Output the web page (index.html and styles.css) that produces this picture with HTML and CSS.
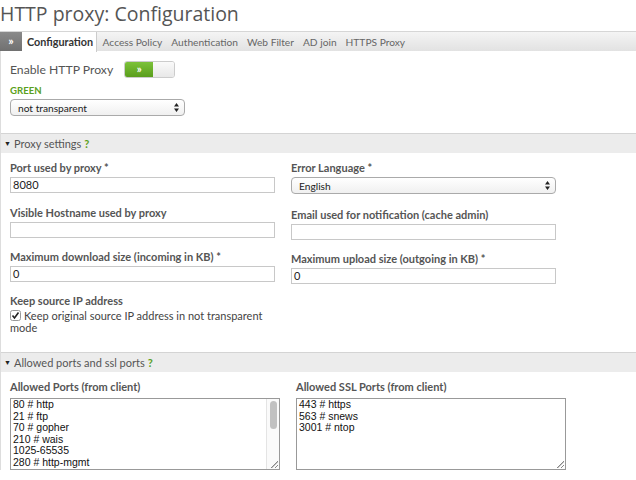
FILE: index.html
```html
<!DOCTYPE html>
<html>
<head>
<meta charset="utf-8">
<link rel="stylesheet" href="styles.css">
</head>
<body>
<h1 class="title">HTTP proxy: Configuration</h1>
<div class="tabs">
  <span class="tab-toggle">»</span>
  <span class="tab active">Configuration</span>
  <span class="tab">Access Policy</span>
  <span class="tab">Authentication</span>
  <span class="tab">Web Filter</span>
  <span class="tab">AD join</span>
  <span class="tab">HTTPS Proxy</span>
</div>
<div class="content">
  <div class="enable-row">
    <span class="enable-label">Enable HTTP Proxy</span>
    <span class="switch"><span class="switch-on">»</span><span class="switch-off"></span></span>
  </div>
  <div class="zone">GREEN</div>
  <div class="select wide"><span>not transparent</span><svg class="arrows" width="5" height="9" viewBox="0 0 5 9"><path d="M2.5 0 L5 3.5 L0 3.5 Z M0 5.5 L5 5.5 L2.5 9 Z" fill="#222"/></svg></div>

  <div class="section-head"><span class="tri">▼</span>Proxy settings <span class="help">?</span></div>
  <div class="grid">
    <div class="field">
      <div class="label">Port used by proxy *</div>
      <div class="input">8080</div>
    </div>
    <div class="field">
      <div class="label">Error Language *</div>
      <div class="select lang"><span>English</span><svg class="arrows" width="5" height="9" viewBox="0 0 5 9"><path d="M2.5 0 L5 3.5 L0 3.5 Z M0 5.5 L5 5.5 L2.5 9 Z" fill="#222"/></svg></div>
    </div>
    <div class="field">
      <div class="label">Visible Hostname used by proxy</div>
      <div class="input"></div>
    </div>
    <div class="field shift">
      <div class="label">Email used for notification (cache admin)</div>
      <div class="input"></div>
    </div>
    <div class="field">
      <div class="label">Maximum download size (incoming in KB) *</div>
      <div class="input">0</div>
    </div>
    <div class="field shift">
      <div class="label">Maximum upload size (outgoing in KB) *</div>
      <div class="input">0</div>
    </div>
    <div class="field">
      <div class="label">Keep source IP address</div>
      <div class="check"><svg class="box" width="11" height="11" viewBox="0 0 11 11"><rect x="0.5" y="0.5" width="10" height="10" rx="2" fill="#fff" stroke="#999"/><path d="M2.5 5.5 L4.5 8 L8.5 2.5" fill="none" stroke="#222" stroke-width="1.6"/></svg><span class="check-text">Keep original source IP address in not transparent mode</span></div>
    </div>
  </div>

  <div class="section-head second"><span class="tri">▼</span>Allowed ports and ssl ports <span class="help">?</span></div>
  <div class="ports">
    <div class="field">
      <div class="label">Allowed Ports (from client)</div>
      <div class="textarea"><div class="lines">80 # http<br>21 # ftp<br>70 # gopher<br>210 # wais<br>1025-65535<br>280 # http-mgmt</div><div class="scroll"><span class="thumb"></span></div><span class="grip"></span></div>
    </div>
    <div class="field">
      <div class="label">Allowed SSL Ports (from client)</div>
      <div class="textarea"><div class="lines">443 # https<br>563 # snews<br>3001 # ntop</div><span class="grip"></span></div>
    </div>
  </div>
</div>
</body>
</html>
```

FILE: styles.css
```css
html, body {
  margin: 0;
  padding: 0;
  background: #fff;
  font-family: "Lato", "Open Sans", sans-serif;
  color: #555;
  overflow: hidden;
}
.title {
  margin: 0;
  height: 31px;
  font-family: "Open Sans", sans-serif;
  font-size: 19.5px;
  font-weight: 400;
  line-height: 28px;
  color: #555;
}
.tabs {
  display: flex;
  align-items: stretch;
  height: 20px;
  border-top: 1px solid #d6d6d6;
  background: linear-gradient(#f4f4f4, #e2e2e2);
  font-size: 10.2px;
  line-height: 20px;
  box-sizing: border-box;
}
.tab-toggle {
  width: 22px;
  background: linear-gradient(#8a8a8a, #707070);
  color: #fff;
  font-size: 12px;
  font-weight: 700;
  text-align: center;
  line-height: 18px;
}
.tab {
  padding: 0 4.5px;
  color: #666;
}
.tab.active {
  background: #fff;
  color: #333;
  font-weight: 700;
  font-size: 10.8px;
  border-right: 1px solid #ccc;
  padding: 0 3px 0 5px;
  margin-bottom: -1px;
  margin-right: 1px;
}
.content {
  border-left: 1px solid #ddd;
  padding-top: 9px;
}
.enable-row {
  display: flex;
  align-items: center;
  gap: 11px;
  padding-left: 9px;
  height: 18px;
}
.enable-label {
  font-size: 12.2px;
  color: #555;
}
.switch {
  display: flex;
  width: 49px;
  height: 15px;
  border: 1px solid #ccc;
  border-radius: 3px;
  overflow: hidden;
}
.switch-on {
  width: 28px;
  background: linear-gradient(#7cc23a, #5a9e1c);
  color: #fff;
  font-size: 11px;
  font-weight: 700;
  text-align: center;
  line-height: 13px;
}
.switch-off {
  flex: 1;
  background: linear-gradient(#fafafa, #e8e8e8);
}
.zone {
  margin: 7px 0 0 9px;
  color: #5aa020;
  font-size: 9.6px;
  font-weight: 700;
  line-height: 12px;
}
.select {
  display: flex;
  justify-content: space-between;
  align-items: center;
  box-sizing: border-box;
  height: 17px;
  border: 1px solid #aaa;
  border-radius: 4px;
  background: linear-gradient(#fff, #f0f0f0);
  color: #222;
  font-size: 10.2px;
  padding: 0 5px 0 7px;
}
.select.wide {
  width: 175px;
  margin: 2px 0 0 9px;
}
.arrows {
  display: block;
  flex: none;
}
.section-head {
  margin-top: 17px;
  height: 19px;
  border-top: 1px solid #d4d4d4;
  background: #ececec;
  font-size: 11px;
  line-height: 19px;
  color: #555;
  display: flex;
  align-items: center;
}
.tri {
  font-size: 7px;
  width: 13px;
  text-align: center;
  color: #222;
}
.help {
  color: #5aa020;
  font-weight: 700;
  margin-left: 3px;
}
.grid {
  display: grid;
  grid-template-columns: 281px 281px;
  align-items: start;
  padding: 8px 0 0 9px;
  row-gap: 12px;
}
.shift .label {
  margin-top: 2px;
}
.shift .input {
  margin-bottom: -2px;
}
.label {
  font-size: 11px;
  font-weight: 700;
  color: #555;
  line-height: 13px;
  margin-bottom: 3px;
}
.input {
  box-sizing: border-box;
  width: 265px;
  height: 16px;
  border: 1px solid #c8c8c8;
  font-size: 11px;
  line-height: 14px;
  padding-left: 2px;
  color: #222;
}
.select.lang {
  width: 265px;
}
.check {
  width: 258px;
  font-size: 11px;
  line-height: 12px;
  color: #444;
}
.box {
  display: inline-block;
  margin-right: 3px;
  vertical-align: -1px;
}
.second {
  margin-top: 18px;
}
.ports {
  display: grid;
  grid-template-columns: 286px 281px;
  padding: 8px 0 0 9px;
}
.ports .label {
  margin-bottom: 5px;
}
.textarea {
  position: relative;
  box-sizing: border-box;
  width: 270px;
  height: 72px;
  border: 1px solid #999;
  font-family: "Liberation Sans", Arial, sans-serif;
  font-size: 10.5px;
  line-height: 11.6px;
  color: #111;
  display: flex;
  overflow: hidden;
}
.lines {
  flex: 1;
  padding: 0 2px;
}
.scroll {
  width: 12px;
  border-left: 1px solid #e4e4e4;
  background: #fafafa;
}
.thumb {
  display: block;
  width: 7px;
  height: 28px;
  margin: 2px auto 0;
  border-radius: 4px;
  background: #c1c1c1;
}
.grip {
  position: absolute;
  right: 1px;
  bottom: 1px;
  width: 8px;
  height: 8px;
  background: linear-gradient(135deg, transparent 55%, #888 56%, #888 62%, transparent 63%, transparent 75%, #888 76%, #888 82%, transparent 83%);
}
```
